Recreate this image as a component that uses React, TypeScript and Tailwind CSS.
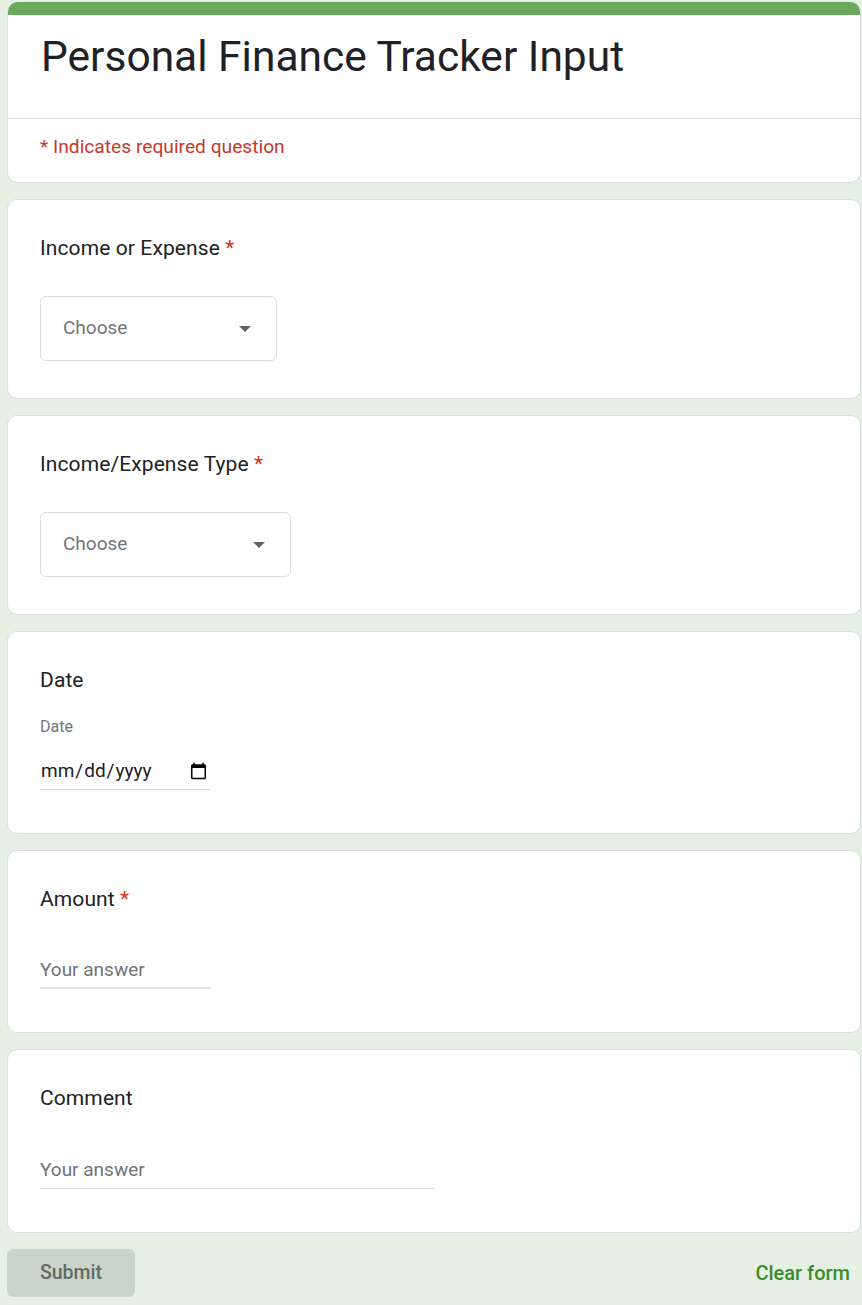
import React from "react";

const font = { fontFamily: "Roboto, 'Liberation Sans', Arial, sans-serif" };

function Card({ children, className = "" }: { children: React.ReactNode; className?: string }) {
  return (
    <div
      className={`rounded-[10px] border border-[#dadce0] bg-white px-[32px] pt-[32px] ${className}`}
    >
      {children}
    </div>
  );
}

function QuestionTitle({ title, required }: { title: string; required?: boolean }) {
  return (
    <div className="h-[32px] text-[21px] leading-[32px] tracking-[0.1px] text-[#202124]">
      {title}
      {required && <span className="text-[#d93025]"> *</span>}
    </div>
  );
}

function Dropdown({ width }: { width: string }) {
  return (
    <div
      className={`mt-[32px] flex h-[65px] items-center justify-between rounded-[6px] border border-[#dadce0] pl-[22px] pr-[25px] ${width}`}
    >
      <span className="text-[19px] text-[#70757a]">Choose</span>
      <svg width="12" height="6" viewBox="0 0 12 6">
        <path d="M0 0h12L6 6z" fill="#5f6368" />
      </svg>
    </div>
  );
}

function AnswerInput({ width, line }: { width: string; line: string }) {
  return (
    <div className={`flex h-[36px] items-center ${width} ${line}`}>
      <span className="text-[19px] text-[#70757a]">Your answer</span>
    </div>
  );
}

export default function App() {
  return (
    <div style={font} className="min-h-[1305px] bg-[#e6efe3] pt-[2px] pl-[7px] pb-[8px]">
      <div className="flex w-[854px] flex-col gap-[16px]">
        <div className="overflow-hidden rounded-[10px] border border-t-0 border-[#dadce0] bg-white">
          <div className="h-[13px] bg-[#6aa95c]" />
          <div className="border-b border-[#dadce0] px-[33px] pt-[15px] pb-[34px]">
            <h1 className="text-[42.5px] leading-[54px] text-[#202124]">
              Personal Finance Tracker Input
            </h1>
          </div>
          <div className="px-[32px] pt-[16px] pb-[23px] text-[19.2px] leading-[24px] text-[#c5392d]">
            * Indicates required question
          </div>
        </div>

        <Card className="pb-[37px]">
          <QuestionTitle title="Income or Expense" required />
          <Dropdown width="w-[237px]" />
        </Card>

        <Card className="pb-[37px]">
          <QuestionTitle title="Income/Expense Type" required />
          <Dropdown width="w-[251px]" />
        </Card>

        <Card className="pb-[43px]">
          <QuestionTitle title="Date" />
          <div className="mt-[19px] text-[16px] leading-[24px] text-[#70757a]">Date</div>
          <input
            type="date"
            className="mt-[15px] h-[36px] w-[170px] border-b border-[#dadce0] text-[19px] text-[#202124] outline-none"
            style={font}
          />
        </Card>

        <Card className="pb-[43px]">
          <QuestionTitle title="Amount" required />
          <div className="mt-[38px]">
            <AnswerInput width="w-[171px]" line="border-b-2 border-[#e0e0e0]" />
          </div>
        </Card>

        <Card className="pb-[43px]">
          <QuestionTitle title="Comment" />
          <div className="mt-[39px]">
            <AnswerInput width="w-[394px]" line="border-b border-[#dadce0]" />
          </div>
        </Card>

        <div className="flex items-center justify-between">
          <button className="h-[48px] w-[128px] rounded-[6px] bg-[#cad5c9] text-[19.5px] font-medium text-[#626a63]">
            Submit
          </button>
          <button className="px-[11px] text-[20px] font-medium text-[#3d8b2f]">Clear form</button>
        </div>
      </div>
    </div>
  );
}
